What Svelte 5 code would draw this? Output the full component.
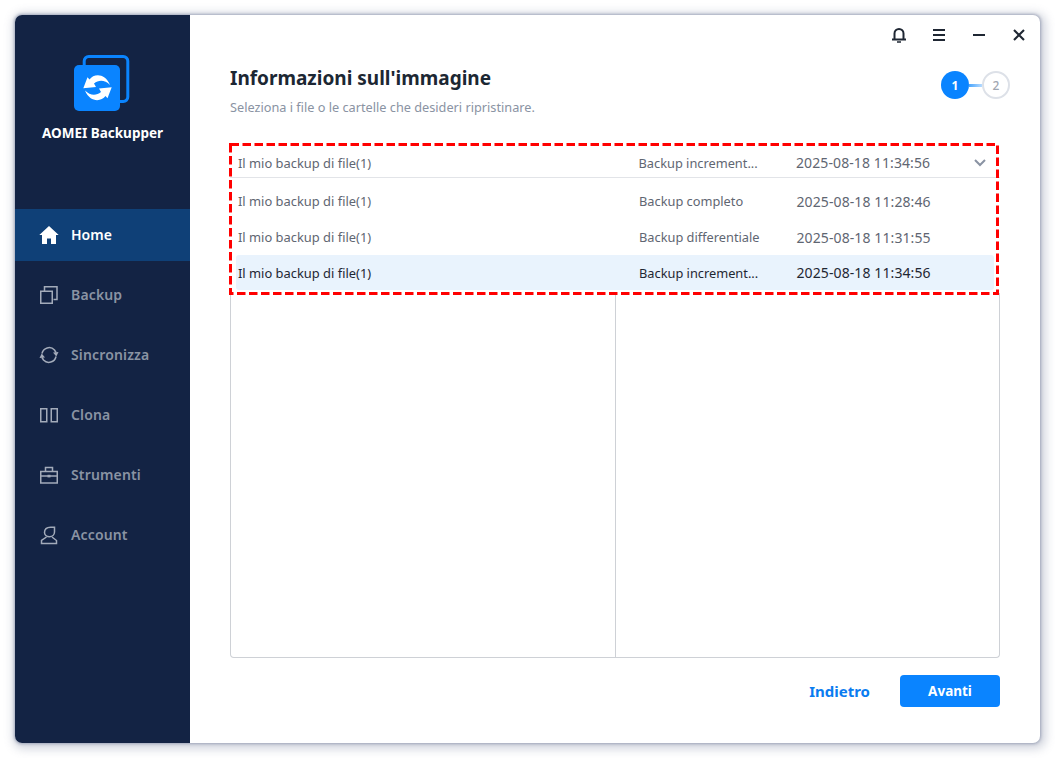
<script>
  const nav = [
    { id: 'home', label: 'Home', active: true },
    { id: 'backup', label: 'Backup' },
    { id: 'sync', label: 'Sincronizza' },
    { id: 'clone', label: 'Clona' },
    { id: 'tools', label: 'Strumenti' },
    { id: 'account', label: 'Account' }
  ];
  const rows = [
    { name: 'Il mio backup di file(1)', type: 'Backup completo', date: '2025-08-18 11:28:46' },
    { name: 'Il mio backup di file(1)', type: 'Backup differentiale', date: '2025-08-18 11:31:55' },
    { name: 'Il mio backup di file(1)', type: 'Backup increment...', date: '2025-08-18 11:34:56', active: true }
  ];
</script>

<div class="stage">
  <div class="window">
    <aside class="sidebar">
      <div class="brand">
        <svg class="logo" width="56" height="56" viewBox="0 0 56 56">
          <path d="M10.200 10V6a4.500 4.500 0 0 1 4.500-4.500H49.300a4.500 4.500 0 0 1 4.500 4.500V42a4.500 4.500 0 0 1-4.500 4.500H46" fill="none" stroke="#0a84ff" stroke-width="3"/>
          <rect x="0" y="10" width="46" height="46" rx="5" fill="#0a84ff"/>
          <path d="M9.300 33.300 13.500 22.300 15.500 24.500C20 18.500 31 18 36 30 31 25 25 24.500 20 28.500L22 32Z" fill="#fff"/>
          <path d="M9.300 33.300 13.500 22.300 15.500 24.500C20 18.500 31 18 36 30 31 25 25 24.500 20 28.500L22 32Z" fill="#fff" transform="rotate(180 23.500 32.800)"/>
        </svg>
        <div class="brand-name">AOMEI Backupper</div>
      </div>
      <nav>
        {#each nav as item}
          <div class="nav-item" class:active={item.active}>
            <svg class="nav-icon" width="20" height="20" viewBox="0 0 20 20" fill="none" stroke="#a3abba" stroke-width="1.500">
              {#if item.id === 'home'}
                <path d="M10 1 .3 10H3v9h5V13.500h4V19h5v-9h2.700z" fill="#fff" stroke="none"/>
              {:else if item.id === 'backup'}
                <rect x="1.750" y="6.250" width="11.500" height="12"/>
                <path d="M5.500 6V1.750H18V14.500H14.500"/>
              {:else if item.id === 'sync'}
                <path d="M3 8.500A7.300 7.300 0 0 1 15.500 5L17 7.500"/>
                <path d="M17 11.500A7.300 7.300 0 0 1 4.500 15L3 12.500"/>
                <path d="M14 7.500 19.500 7 17.300 11.500zM6 12.500 .5 13 2.700 8.500z" fill="#a3abba" stroke="none"/>
              {:else if item.id === 'clone'}
                <rect x="1.750" y="3.750" width="6" height="13"/>
                <rect x="12.250" y="3.750" width="6" height="13"/>
              {:else if item.id === 'tools'}
                <rect x="1.750" y="6.500" width="16.500" height="11.500"/>
                <path d="M6.500 6.500V2.500h7v4M1.750 11h16.500"/>
                <rect x="8.500" y="9.800" width="3" height="2.600" fill="#a3abba" stroke="none"/>
              {:else}
                <path d="M5.500 7.500C5.500 4 8 2.200 11.500 2.200H15.500V7C15.500 10 13 11.700 10.500 11.700S5.500 10 5.500 7.500z"/>
                <path d="M7.500 12 2.500 15.500V18.500H17.500V15.500L13 12"/>
              {/if}
            </svg>
            <span class="nav-label">{item.label}</span>
          </div>
        {/each}
      </nav>
    </aside>

    <main class="content">
      <div class="titlebar">
        <svg class="bell" width="16" height="16" viewBox="0 0 16 16" fill="none" stroke="#1f2733" stroke-width="2">
          <path d="M3.500 12V6.500a4.500 4.500 0 0 1 9 0V12M1 12.500h14"/>
          <path d="M6 15h4" stroke-width="1.600"/>
        </svg>
        <svg width="14" height="14" viewBox="0 0 14 14" stroke="#1f2733" stroke-width="2"><path d="M1 2h12M1 7h12M1 12h12"/></svg>
        <svg width="14" height="14" viewBox="0 0 14 14" stroke="#1f2733" stroke-width="2"><path d="M1 7h12"/></svg>
        <svg width="14" height="14" viewBox="0 0 14 14" stroke="#1f2733" stroke-width="2.100"><path d="M2 2l10 10M12 2 2 12"/></svg>
      </div>

      <header class="head">
        <div>
          <h1>Informazioni sull'immagine</h1>
          <p>Seleziona i file o le cartelle che desideri ripristinare.</p>
        </div>
        <div class="steps">
          <span class="step on">1</span>
          <span class="link"></span>
          <span class="step">2</span>
        </div>
      </header>

      <section class="panel">
        <div class="select">
          <span class="c-name">Il mio backup di file(1)</span>
          <span class="c-type">Backup increment...</span>
          <span class="c-date">2025-08-18 11:34:56</span>
          <svg class="chev" width="12" height="8" viewBox="0 0 12 8" fill="none" stroke="#8a93a3" stroke-width="2"><path d="M1 1l5 5 5-5"/></svg>
        </div>
        <div class="menu">
          {#each rows as r}
            <div class="row" class:active={r.active}>
              <span class="c-name">{r.name}</span>
              <span class="c-type">{r.type}</span>
              <span class="c-date">{r.date}</span>
            </div>
          {/each}
        </div>
        <div class="split">
          <div class="pane"></div>
          <div class="pane"></div>
        </div>
        <svg class="dashed" width="770" height="152" viewBox="0 0 770 152">
          <rect x="1.500" y="1.500" width="767" height="149" fill="none" stroke="#f00" stroke-width="3" stroke-dasharray="8.500 3.500"/>
        </svg>
      </section>

      <footer class="actions">
        <button class="ghost">Indietro</button>
        <button class="primary">Avanti</button>
      </footer>
    </main>
  </div>
</div>

<style>
  :global(body) { margin: 0; background: #fff; }
  .stage {
    width: 1055px;
    height: 758px;
    padding: 15px;
    box-sizing: border-box;
    font-family: "Noto Sans", "Open Sans", sans-serif;
  }
  .window {
    width: 1025px;
    height: 728px;
    display: flex;
    border-radius: 7px;
    overflow: hidden;
    background: #fff;
    box-shadow: 0 0 3px 1px rgba(110, 120, 150, 0.55), 2px 2px 10px 4px rgba(110, 120, 150, 0.3);
  }
  .sidebar {
    width: 175px;
    flex: none;
    background: #132344;
  }
  .brand {
    height: 194px;
    box-sizing: border-box;
    padding-top: 40px;
    display: flex;
    flex-direction: column;
    align-items: center;
  }
  .logo { align-self: flex-start; margin-left: 59px; }
  .brand-name {
    margin-top: 12px;
    color: #fff;
    font-size: 13.500px;
    font-weight: 700;
    line-height: 20px;
  }
  .nav-item {
    height: 52px;
    margin-bottom: 8px;
    display: flex;
    align-items: center;
    padding-left: 24px;
    gap: 12px;
    color: #8a93a3;
    font-size: 14px;
    letter-spacing: 0.150px;
    font-weight: 600;
  }
  .nav-label { margin-bottom: 2px; }
  .nav-item.active {
    background: #0f4077;
    color: #fff;
    letter-spacing: 0;
  }
  .nav-icon { flex: none; }
  .content {
    flex: 1;
    display: flex;
    flex-direction: column;
    padding: 0 40px;
    min-width: 0;
    position: relative;
  }
  .titlebar {
    height: 40px;
    margin-right: -26px;
    display: flex;
    justify-content: flex-end;
    align-items: center;
    gap: 26px;
  }
  .bell { margin-right: -1px; }
  .head {
    display: flex;
    justify-content: space-between;
    align-items: flex-start;
    height: 88px;
  }
  h1 {
    margin: 10px 0 0;
    font-size: 19px;
    line-height: 26px;
    font-weight: 700;
    color: #1c2733;
  }
  p {
    margin: 7px 0 0;
    font-size: 12.720px;
    line-height: 18px;
    color: #8a93a3;
  }
  .steps {
    display: flex;
    align-items: center;
    margin-top: 16px;
    margin-right: -10px;
  }
  .step {
    width: 24px;
    height: 24px;
    border-radius: 50%;
    border: 2px solid #dde1e8;
    color: #a0a6b0;
    font-size: 12px;
    font-weight: 500;
    display: flex;
    align-items: center;
    justify-content: center;
  }
  .step.on {
    width: 28px;
    height: 28px;
    border: 0;
    background: #0a84ff;
    color: #fff;
    font-weight: 700;
  }
  .link { width: 13px; height: 3px; background: linear-gradient(90deg, #4ba6fd, #b5daff); }
  .panel {
    position: relative;
    height: 515px;
    display: flex;
    flex-direction: column;
    color: #5f6672;
    font-size: 12.800px;
  }
  .select, .row {
    display: flex;
    align-items: center;
  }
  .select {
    height: 29px;
    margin-top: 5px;
    padding-left: 8px;
    border-bottom: 1px solid #e2e4e8;
    position: relative;
  }
  .menu { margin-top: 5px; }
  .row {
    height: 36px;
    padding-left: 2px;
    margin: 0 6px;
    border-radius: 3px;
  }
  .row.active { background: #e9f3fd; color: #1f2733; height: 35px; }
  .select .c-name { width: 400.500px; }
  .c-name { width: 401px; flex: none; font-size: 12.900px; }
  .c-type { width: 157.500px; flex: none; }
  .c-date { font-size: 14px; letter-spacing: 0.100px; }
  .chev { position: absolute; right: 14px; top: 11px; }
  .split {
    flex: 1;
    margin-top: 3px;
    display: flex;
    border: 1px solid #ced1d6;
    border-top: 0;
    border-radius: 0 0 4px 4px;
  }
  .pane { width: 384px; }
  .pane + .pane { flex: 1; width: auto; border-left: 1px solid #ced1d6; }
  .dashed {
    position: absolute;
    left: -1px;
    top: 0;
    pointer-events: none;
  }
  .actions {
    margin-top: 17px;
    display: flex;
    justify-content: flex-end;
    align-items: center;
  }
  button {
    height: 32px;
    font-family: inherit;
    font-size: 15px;
    font-weight: 700;
    border: 0;
    border-radius: 4px;
    padding: 0;
  }
  .ghost { background: none; color: #0a7cf0; margin-right: 30px; }
  .primary { width: 100px; background: #0a84ff; color: #fff; font-size: 13.500px; }
</style>
